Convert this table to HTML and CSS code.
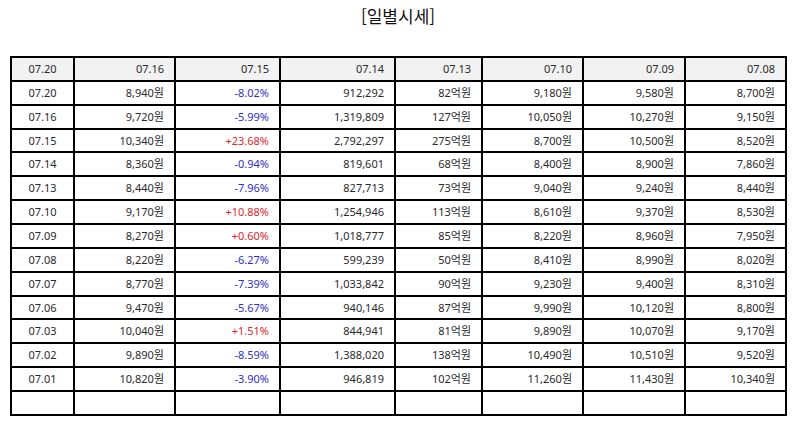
FILE: index.html
```html
<!DOCTYPE html>
<html lang="ko">
<head>
<meta charset="utf-8">
<link rel="stylesheet" href="styles.css">
</head>
<body>
<div class="page">
  <h1 class="title">[일별시세]</h1>
  <table class="quotes">
    <colgroup>
      <col class="c1"><col class="c2"><col class="c3"><col class="c4"><col class="c5"><col class="c6"><col class="c7"><col class="c8">
    </colgroup>
    <thead>
      <tr><th class="ctr">07.20</th><th>07.16</th><th>07.15</th><th>07.14</th><th>07.13</th><th>07.10</th><th>07.09</th><th>07.08</th></tr>
    </thead>
    <tbody>
      <tr><td class="ctr">07.20</td><td>8,940원</td><td class="down">-8.02%</td><td>912,292</td><td>82억원</td><td>9,180원</td><td>9,580원</td><td>8,700원</td></tr>
      <tr><td class="ctr">07.16</td><td>9,720원</td><td class="down">-5.99%</td><td>1,319,809</td><td>127억원</td><td>10,050원</td><td>10,270원</td><td>9,150원</td></tr>
      <tr><td class="ctr">07.15</td><td>10,340원</td><td class="up">+23.68%</td><td>2,792,297</td><td>275억원</td><td>8,700원</td><td>10,500원</td><td>8,520원</td></tr>
      <tr><td class="ctr">07.14</td><td>8,360원</td><td class="down">-0.94%</td><td>819,601</td><td>68억원</td><td>8,400원</td><td>8,900원</td><td>7,860원</td></tr>
      <tr><td class="ctr">07.13</td><td>8,440원</td><td class="down">-7.96%</td><td>827,713</td><td>73억원</td><td>9,040원</td><td>9,240원</td><td>8,440원</td></tr>
      <tr><td class="ctr">07.10</td><td>9,170원</td><td class="up">+10.88%</td><td>1,254,946</td><td>113억원</td><td>8,610원</td><td>9,370원</td><td>8,530원</td></tr>
      <tr><td class="ctr">07.09</td><td>8,270원</td><td class="up">+0.60%</td><td>1,018,777</td><td>85억원</td><td>8,220원</td><td>8,960원</td><td>7,950원</td></tr>
      <tr><td class="ctr">07.08</td><td>8,220원</td><td class="down">-6.27%</td><td>599,239</td><td>50억원</td><td>8,410원</td><td>8,990원</td><td>8,020원</td></tr>
      <tr><td class="ctr">07.07</td><td>8,770원</td><td class="down">-7.39%</td><td>1,033,842</td><td>90억원</td><td>9,230원</td><td>9,400원</td><td>8,310원</td></tr>
      <tr><td class="ctr">07.06</td><td>9,470원</td><td class="down">-5.67%</td><td>940,146</td><td>87억원</td><td>9,990원</td><td>10,120원</td><td>8,800원</td></tr>
      <tr><td class="ctr">07.03</td><td>10,040원</td><td class="up">+1.51%</td><td>844,941</td><td>81억원</td><td>9,890원</td><td>10,070원</td><td>9,170원</td></tr>
      <tr><td class="ctr">07.02</td><td>9,890원</td><td class="down">-8.59%</td><td>1,388,020</td><td>138억원</td><td>10,490원</td><td>10,510원</td><td>9,520원</td></tr>
      <tr><td class="ctr">07.01</td><td>10,820원</td><td class="down">-3.90%</td><td>946,819</td><td>102억원</td><td>11,260원</td><td>11,430원</td><td>10,340원</td></tr>
      <tr><td class="ctr"></td><td></td><td></td><td></td><td></td><td></td><td></td><td></td></tr>
    </tbody>
  </table>
</div>
</body>
</html>
```
FILE: styles.css
```css
html, body {
  margin: 0;
  padding: 0;
  background: #fff;
}
body {
  font-family: "Noto Sans", "Noto Sans CJK KR", sans-serif;
  color: #2a2a2a;
}
.page {
  padding: 6px 8px 0 10px;
}
.title {
  margin: 0 0 30px 0;
  font-size: 17px;
  line-height: 20px;
  font-weight: normal;
  text-align: center;
  color: #111;
  font-family: "Noto Sans CJK KR", sans-serif;
}
.quotes {
  width: 775px;
  border-collapse: collapse;
  table-layout: fixed;
  font-size: 11px;
}
.c1 { width: 63px; }
.c2 { width: 101px; }
.c3 { width: 105px; }
.c4 { width: 115px; }
.c5 { width: 87px; }
.c6 { width: 101px; }
.c7 { width: 102px; }
.c8 { width: 101px; }
.quotes th,
.quotes td {
  border: 2px solid #000;
  height: 21.87px;
  padding: 0 10px 0 0;
  text-align: right;
  font-weight: normal;
  line-height: 14px;
  white-space: nowrap;
}
.quotes th {
  background: #f2f2f2;
}
.quotes .ctr {
  text-align: center;
  padding: 0;
}
.quotes .up { color: #e0252b; }
.quotes .down { color: #3030c8; }
```
